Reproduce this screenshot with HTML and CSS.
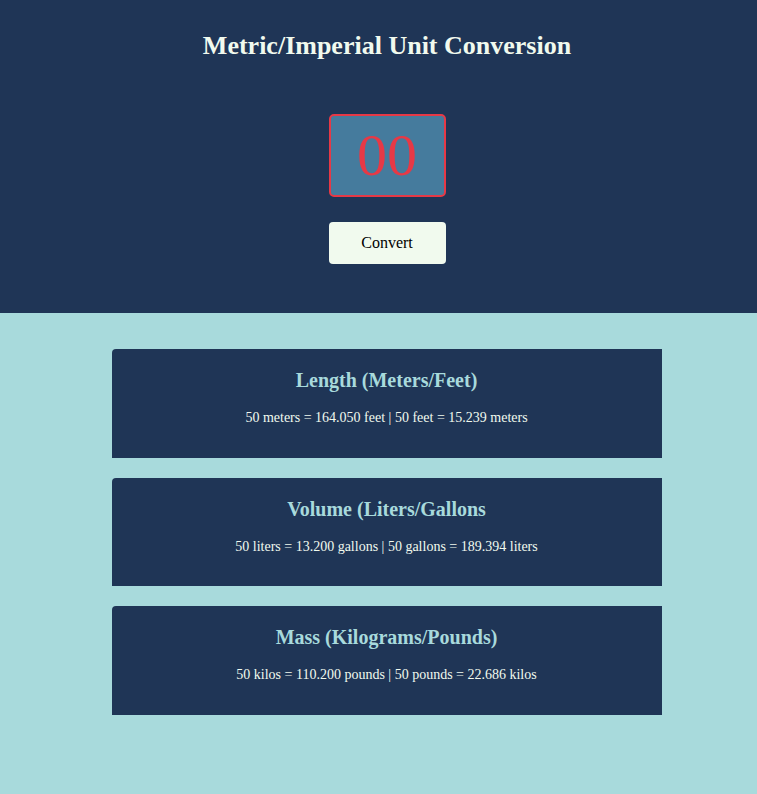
FILE: index.html
```html
<!DOCTYPE html>
<html>
<head>
<meta charset="utf-8">
<link rel="stylesheet" href="styles.css">
</head>
<body>
<header class="top">
  <h1 class="title">Metric/Imperial Unit Conversion</h1>
  <div class="input-box">00</div>
  <button class="convert-btn">Convert</button>
</header>
<main class="results">
  <section class="card">
    <h2 class="card-title">Length (Meters/Feet)</h2>
    <p class="card-text">50 meters = 164.050 feet | 50 feet = 15.239 meters</p>
  </section>
  <section class="card">
    <h2 class="card-title">Volume (Liters/Gallons</h2>
    <p class="card-text">50 liters = 13.200 gallons | 50 gallons = 189.394 liters</p>
  </section>
  <section class="card">
    <h2 class="card-title">Mass (Kilograms/Pounds)</h2>
    <p class="card-text">50 kilos = 110.200 pounds | 50 pounds = 22.686 kilos</p>
  </section>
</main>
</body>
</html>
```
FILE: styles.css
```css
html, body {
  margin: 0;
  padding: 0;
}
body {
  font-family: "Liberation Serif", "Times New Roman", serif;
  background: #A8DADC;
  min-height: 794px;
}
.top {
  background: #1F3556;
  height: 313px;
  box-sizing: border-box;
  padding-top: 30px;
  padding-left: 17px;
  display: flex;
  flex-direction: column;
  align-items: center;
}
.title {
  margin: 0;
  color: #F1FAEE;
  font-size: 26px;
  font-weight: bold;
  line-height: 32px;
}
.input-box {
  margin-top: 52px;
  width: 117px;
  height: 83px;
  box-sizing: border-box;
  border: 2px solid #E63946;
  border-radius: 5px;
  background: #457B9D;
  color: #E63946;
  font-family: "Liberation Serif", "Times New Roman", serif;
  font-size: 60px;
  line-height: 79px;
  text-align: center;
}
.convert-btn {
  margin-top: 25px;
  width: 117px;
  height: 42px;
  border: none;
  border-radius: 4px;
  background: #F1FAEE;
  color: #000;
  font-family: "Liberation Serif", "Times New Roman", serif;
  font-size: 16px;
}
.results {
  padding-top: 36px;
  padding-left: 16px;
  display: flex;
  flex-direction: column;
  align-items: center;
  gap: 20px;
}
.card {
  width: 550px;
  height: 108.67px;
  box-sizing: border-box;
  background: #1F3556;
  border-radius: 4px 0 0 0;
  padding-top: 19px;
  text-align: center;
}
.card-title {
  margin: 0;
  color: #A8DADC;
  font-size: 20px;
  font-weight: bold;
  line-height: 24px;
}
.card-text {
  margin: 17px 0 0;
  color: #F1FAEE;
  font-size: 14px;
  line-height: 18px;
}
```
